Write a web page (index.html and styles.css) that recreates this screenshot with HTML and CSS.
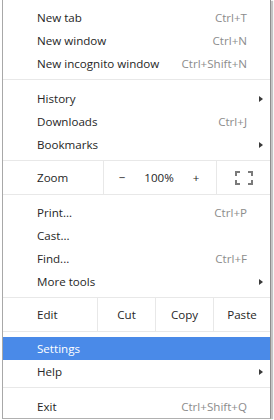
FILE: index.html
```html
<!DOCTYPE html>
<html lang="en">
<head>
  <meta charset="UTF-8">
  <meta name="viewport" content="width=device-width, initial-scale=1.0">
  <title>Menu</title>
  <link rel="stylesheet" href="styles.css">
</head>
<body>
  <div class="menu">
    <div class="item"><span class="label">New tab</span><span class="key">Ctrl+T</span></div>
    <div class="item"><span class="label">New window</span><span class="key">Ctrl+N</span></div>
    <div class="item"><span class="label">New incognito window</span><span class="key">Ctrl+Shift+N</span></div>

    <div class="sep"></div>

    <div class="item sub"><span class="label">History</span><span class="arrow"></span></div>
    <div class="item"><span class="label">Downloads</span><span class="key">Ctrl+J</span></div>
    <div class="item sub"><span class="label">Bookmarks</span><span class="arrow"></span></div>

    <div class="sep sep-tight"></div>

    <!-- zoom -->
    <div class="split zoom">
      <div class="cell cell-label">Zoom</div>
      <div class="cell zoom-ctrl">
        <span class="zbtn">&minus;</span>
        <span class="zval">100%</span>
        <span class="zbtn">+</span>
      </div>
      <div class="cell cell-full">
        <svg width="18" height="14" viewBox="0 0 18 14" fill="none" stroke="#7a7a7a" stroke-width="2">
          <path d="M1 5V1h4M13 1h4v4M17 9v4h-4M5 13H1V9"/>
        </svg>
      </div>
    </div>

    <div class="group">
      <div class="item"><span class="label">Print...</span><span class="key">Ctrl+P</span></div>
      <div class="item"><span class="label">Cast...</span></div>
      <div class="item"><span class="label">Find...</span><span class="key">Ctrl+F</span></div>
      <div class="item sub"><span class="label">More tools</span><span class="arrow"></span></div>
    </div>

    <div class="sep sep-tight"></div>

    <!-- edit -->
    <div class="split edit">
      <div class="cell cell-label edit-label">Edit</div>
      <div class="cell ebtn">Cut</div>
      <div class="cell ebtn">Copy</div>
      <div class="cell ebtn ebtn-last">Paste</div>
    </div>

    <div class="group group-edit">
      <div class="item active"><span class="label">Settings</span></div>
      <div class="item sub"><span class="label">Help</span><span class="arrow"></span></div>
    </div>

    <div class="sep"></div>

    <div class="item"><span class="label">Exit</span><span class="key">Ctrl+Shift+Q</span></div>
  </div>
</body>
</html>
```

FILE: styles.css
```css
body {
  margin: 0;
  background-color: #ffffff;
  font-family: "Open Sans", "Noto Sans", Arial, sans-serif;
  font-size: 11.6px;
  color: #262626;
}

.menu {
  margin-left: 2px;
  width: 267px;
  padding-top: 6px;
  border-left: 1px solid #a8a8a8;
  border-right: 1px solid #8e8e8e;
  border-bottom: 1px solid #b0b0b0;
  box-shadow: 2px 1px 1px #c4c4c4;
  background-color: #ffffff;
}

.item {
  display: flex;
  align-items: center;
  height: 23px;
  padding: 0 23px 0 34px;
}

.item.sub {
  padding-right: 7px;
}

.label {
  flex: 1;
  white-space: nowrap;
}

.key {
  color: #8c8c8c;
  white-space: nowrap;
}

.arrow {
  width: 0;
  height: 0;
  border-top: 3px solid transparent;
  border-bottom: 3px solid transparent;
  border-left: 4px solid #3a3a3a;
}

.item.active {
  background-color: #4a8ae8;
  color: #ffffff;
}

.sep {
  height: 1px;
  margin: 4px 0 7px;
  background-color: #e8e8e8;
}

.sep-tight {
  margin-bottom: 0;
}

.group {
  padding-top: 6px;
}

.group-edit {
  padding-top: 5px;
}

.split {
  display: flex;
  height: 33px;
  border-bottom: 1px solid #e8e8e8;
}

.cell {
  display: flex;
  align-items: center;
  border-left: 1px solid #e8e8e8;
}

.cell-label {
  border-left: none;
  padding-left: 34px;
  width: 66px;
}

.zoom-ctrl {
  width: 112px;
}

.zbtn {
  width: 36px;
  text-align: center;
}

.zval {
  width: 38px;
  text-align: center;
}

.cell-full {
  flex: 1;
  justify-content: center;
}

.edit-label {
  width: 60px;
}

.ebtn {
  width: 57px;
  justify-content: center;
}

.ebtn-last {
  flex: 1;
}
```
